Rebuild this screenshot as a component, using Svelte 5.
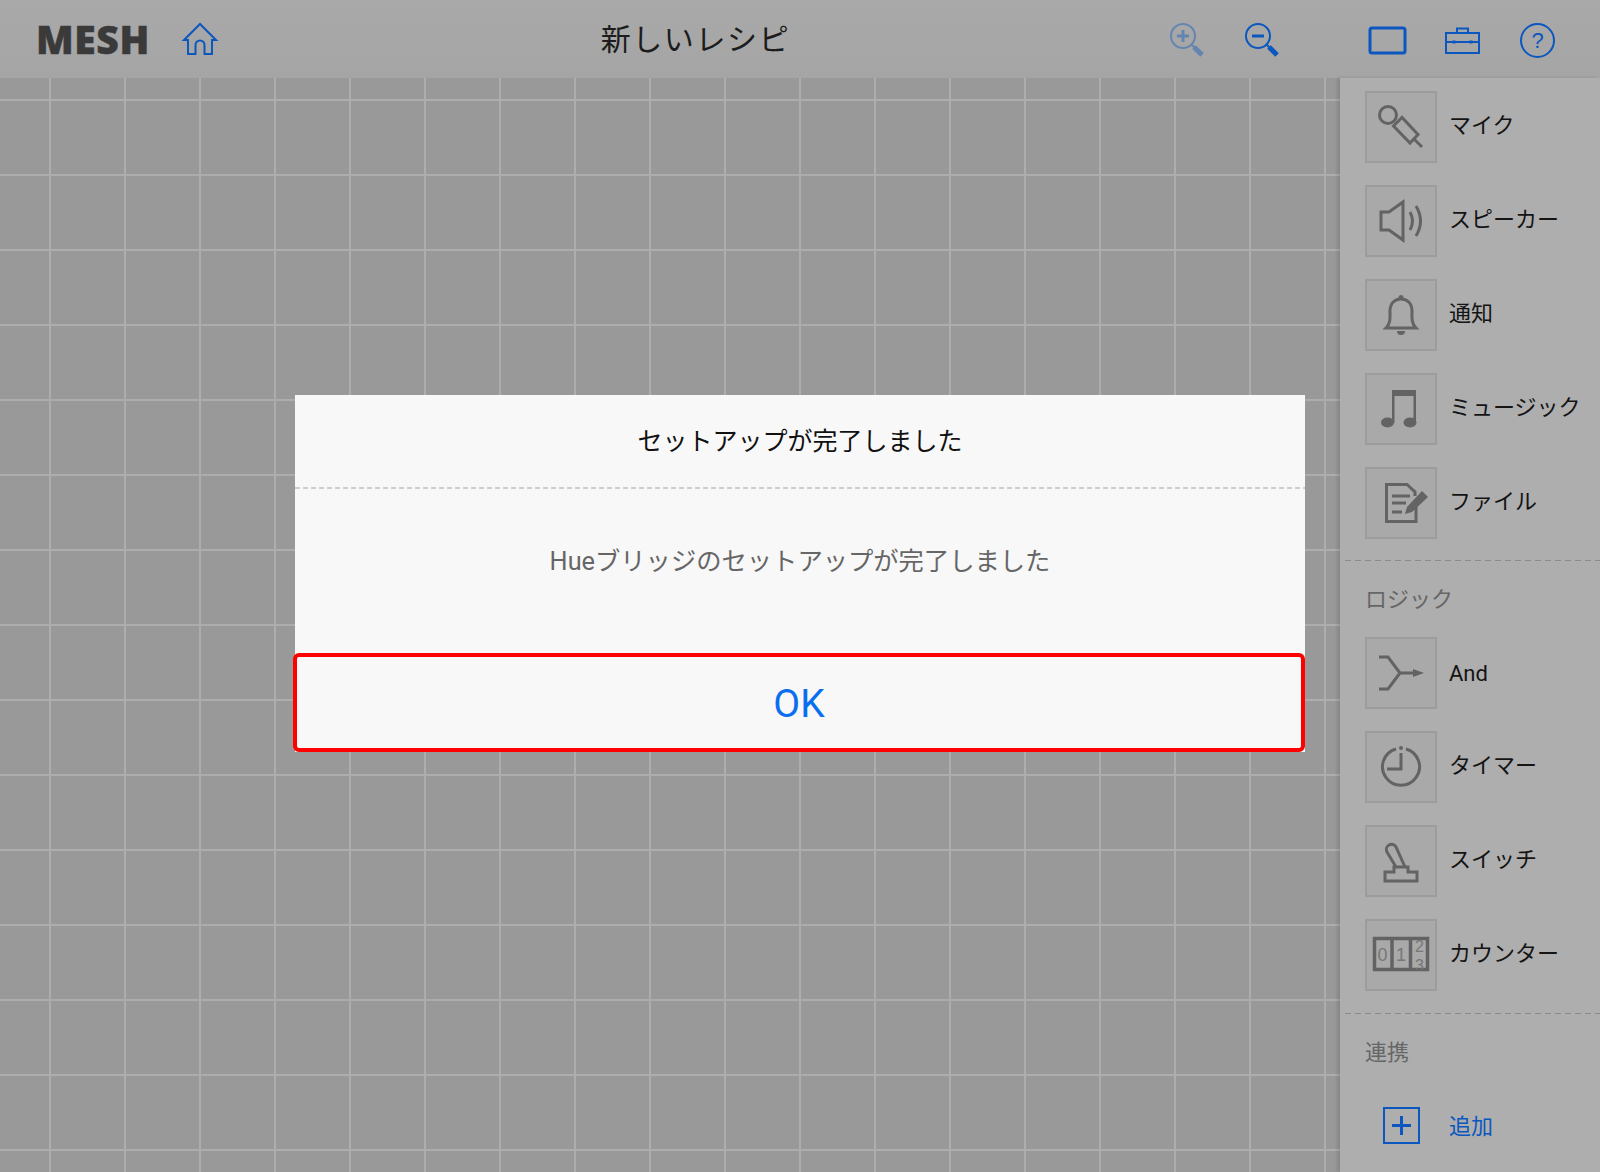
<script>
  const tools = [
    { id: "mic", label: "マイク" },
    { id: "speaker", label: "スピーカー" },
    { id: "bell", label: "通知" },
    { id: "music", label: "ミュージック" },
    { id: "file", label: "ファイル" }
  ];
  const logic = [
    { id: "and", label: "And", latin: true },
    { id: "timer", label: "タイマー" },
    { id: "switch", label: "スイッチ" },
    { id: "counter", label: "カウンター" }
  ];
</script>

{#snippet tileIcon(id)}
  <svg class="glyph" viewBox="0 0 72 72" width="72" height="72">
    {#if id === "mic"}
      <circle cx="23" cy="24" r="8.5" />
      <path d="M28.5 35 L37 26.5 L53 43.5 L45 52 Z M49 48 L57 56" />
    {:else if id === "speaker"}
      <path d="M16 27 H24 L38 17 V55 L24 45 H16 Z" />
      <path d="M45 27 Q50 36 45 45 M51 21 Q60 36 51 51" />
    {:else if id === "bell"}
      <path d="M21 49 C26 44 25 38 25 32 C25 24 30 20 36 20 C42 20 47 24 47 32 C47 38 46 44 51 49 Z" />
      <circle class="solid" cx="36" cy="18.5" r="2.5" />
      <path class="solid" d="M32 52 H40 A4 4 0 0 1 32 52 Z" />
    {:else if id === "music"}
      <path class="solid" d="M27 17 H51 V50 H48.5 V23 H29.5 V50 H27 Z" />
      <ellipse class="solid" cx="22.5" cy="49.5" rx="6.5" ry="5" />
      <ellipse class="solid" cx="45" cy="49.5" rx="6.5" ry="5" />
    {:else if id === "file"}
      <path d="M51 38 V54.5 H21.5 V17.5 H42 L50 25 V29" />
      <path d="M27 29 H45 M27 36 H41 M27 45 H37" />
      <path class="solid" d="M57 24 L63 30 L47 45 L40 47 L42 40 Z" />
    {:else if id === "and"}
      <path d="M14 20 H23 L35 36 L23 52 H14 M35 36 H48" />
      <path class="solid" d="M48 32 L59 36 L48 40 Z" />
    {:else if id === "timer"}
      <path d="M41 18 A18.5 18.5 0 1 1 31 18" />
      <circle class="solid" cx="36" cy="17" r="2" />
      <path d="M36 22 V38 H22" />
    {:else if id === "switch"}
      <path d="M31 42 L22 27 A5 5 0 0 1 31 22 L40 42" />
      <path d="M29 42 H43 V47 H52 V56 H20 V47 H29 Z" />
    {:else if id === "counter"}
      <defs>
        <clipPath id="reel"><rect x="47" y="20" width="16" height="30.5" /></clipPath>
      </defs>
      <rect class="frame" x="9.5" y="19.5" width="53" height="31" />
      <path class="frame" d="M27 19 V51 M45.5 19 V51" />
      <text x="17.5" y="41.5">0</text>
      <text x="36" y="41.5">1</text>
      <g clip-path="url(#reel)">
        <text class="small" x="54.5" y="32.5">2</text>
        <text class="small" x="54.5" y="52">3</text>
      </g>
    {/if}
  </svg>
{/snippet}

<div class="page">
  <header>
    <div class="left">
      <span class="logo">MESH</span>
      <svg class="nav" viewBox="0 0 40 40" width="40" height="40">
        <path d="M4 21 L20 5 L36 21 H32 V35 H24.5 V26 A4.5 4.5 0 0 0 15.5 26 V35 H8 V21 Z" />
      </svg>
    </div>
    <h1>新しいレシピ</h1>
    <div class="actions">
      <div class="cell faded">
        <svg class="nav" viewBox="0 0 40 40" width="40" height="40">
          <circle cx="15" cy="17" r="12" />
          <path class="fat" d="M9 17 H21 M15 11 V23" />
          <path d="M23.5 25.5 L27 29" />
          <path class="handle" d="M26 28 L34 36" />
        </svg>
      </div>
      <div class="cell">
        <svg class="nav" viewBox="0 0 40 40" width="40" height="40">
          <circle cx="15" cy="17" r="12" />
          <path class="fat" d="M9 17 H21" />
          <path d="M23.5 25.5 L27 29" />
          <path class="handle" d="M26 28 L34 36" />
        </svg>
      </div>
      <div class="cell spaced">
        <svg class="nav thick" viewBox="0 0 40 40" width="40" height="40">
          <rect x="2" y="9" width="35" height="25" rx="2" />
        </svg>
      </div>
      <div class="cell">
        <svg class="nav" viewBox="0 0 40 40" width="40" height="40">
          <rect x="3" y="14" width="33" height="20" />
          <path d="M14 14 V9.5 H25 V14 M3 23 H36" />
          <path class="fat" d="M9.5 23 H12.5 M26.5 23 H29.5" />
        </svg>
      </div>
      <div class="cell help">
        <span class="ring">?</span>
      </div>
    </div>
  </header>

  <main>
    <div class="canvas"></div>
    <aside>
      {#each tools as tool}
        <div class="row">
          <div class="tile">{@render tileIcon(tool.id)}</div>
          <span>{tool.label}</span>
        </div>
      {/each}

      <div class="divider"></div>
      <div class="section">ロジック</div>
      {#each logic as tool}
        <div class="row">
          <div class="tile">{@render tileIcon(tool.id)}</div>
          <span class:latin={tool.latin}>{tool.label}</span>
        </div>
      {/each}

      <div class="divider last"></div>
      <div class="section">連携</div>
      <div class="add">
        <div class="slot"><div class="plus"></div></div>
        <span>追加</span>
      </div>
    </aside>
  </main>

  <div class="dialog">
    <div class="title">セットアップが完了しました</div>
    <div class="rule"></div>
    <div class="message">Hueブリッジのセットアップが完了しました</div>
    <button>OK</button>
  </div>
</div>

<style>
  :global(body) {
    margin: 0;
    background: #999;
  }

  .page {
    position: relative;
    width: 1600px;
    height: 1172px;
    overflow: hidden;
    font-family: Roboto, "Noto Sans CJK JP", sans-serif;
    color: #141414;
    display: flex;
    flex-direction: column;
  }

  header {
    height: 78px;
    flex: none;
    display: flex;
    align-items: center;
    background: linear-gradient(to bottom, #a9a9a9, #a5a5a5);
  }

  .left {
    display: flex;
    align-items: center;
    padding-left: 36px;
    gap: 30px;
  }

  .logo {
    font-family: "Open Sans", sans-serif;
    font-weight: 800;
    font-size: 39px;
    line-height: 40px;
    letter-spacing: 0.6px;
    color: #3a3a3a;
    -webkit-text-stroke: 0.5px #3a3a3a;
  }

  h1 {
    flex: 1;
    margin: 0;
    padding: 0 0 5px 21px;
    text-align: center;
    font-size: 30px;
    font-weight: 400;
    letter-spacing: 1.6px;
    color: #1c1c1c;
  }

  .actions {
    display: flex;
    padding-right: 25px;
  }

  .cell {
    width: 75px;
    display: flex;
    justify-content: center;
  }

  .cell.faded {
    opacity: 0.42;
  }

  .cell.spaced {
    margin-left: 50px;
  }

  .nav {
    display: block;
  }

  .nav path,
  .nav circle,
  .nav rect {
    fill: none;
    stroke: #0b57bf;
    stroke-width: 2;
  }

  .nav.thick rect {
    stroke-width: 3;
  }

  .nav .fat {
    stroke-width: 3;
  }

  .nav .handle {
    stroke-width: 5;
  }

  .help {
    padding-top: 4px;
  }

  .ring {
    box-sizing: border-box;
    width: 35px;
    height: 35px;
    border: 2px solid #0b57bf;
    border-radius: 50%;
    display: flex;
    align-items: center;
    justify-content: center;
    font-size: 22px;
    font-family: "Liberation Sans", sans-serif;
    color: #0b57bf;
  }

  main {
    flex: 1;
    display: flex;
    min-height: 0;
  }

  .canvas {
    flex: 1;
    background-color: #999;
    background-image:
      linear-gradient(to right, #adadad 2px, transparent 2px),
      linear-gradient(to bottom, #adadad 2px, transparent 2px);
    background-size: 75px 75px;
    background-position: 49px 21px;
  }

  aside {
    box-sizing: border-box;
    width: 260px;
    flex: none;
    padding: 13px 0 0 25px;
    background: #aeaeae;
    box-shadow: -3px 0 3px rgba(0, 0, 0, 0.12);
    position: relative;
  }

  .row {
    display: flex;
    align-items: center;
    height: 72px;
    gap: 12px;
    margin-bottom: 22px;
    font-size: 22px;
    white-space: nowrap;
  }

  .row span {
    padding-bottom: 8px;
  }

  .row span.latin {
    padding-bottom: 0;
  }

  .tile {
    box-sizing: border-box;
    width: 72px;
    height: 72px;
    flex: none;
    border: 2px solid #9c9c9c;
    background: #a9a9a9;
  }

  .glyph {
    display: block;
    margin: -2px;
  }

  .glyph path,
  .glyph circle,
  .glyph rect,
  .glyph ellipse {
    fill: none;
    stroke: #636363;
    stroke-width: 3;
  }

  .glyph .solid {
    fill: #636363;
    stroke: none;
  }

  .glyph .frame {
    stroke-width: 3.5;
  }

  .glyph text {
    font-family: "Liberation Sans", sans-serif;
    font-size: 18px;
    text-anchor: middle;
    fill: #777;
    stroke: none;
  }

  .glyph text.small {
    font-size: 16px;
  }

  .divider {
    height: 1px;
    margin: -1px 0 24px -20px;
    background: repeating-linear-gradient(to right, #8a8a8a 0 6px, transparent 6px 10px);
  }

  .divider.last {
    margin-top: 0;
  }

  .section {
    font-size: 22px;
    line-height: 30px;
    color: #666;
    margin-bottom: 22px;
  }

  .add {
    display: flex;
    align-items: center;
    height: 72px;
    margin-top: -1px;
    gap: 12px;
    font-size: 22px;
    color: #0b57bf;
  }

  .add span {
    padding-bottom: 2px;
  }

  .slot {
    width: 72px;
    display: flex;
    justify-content: center;
  }

  .plus {
    box-sizing: border-box;
    width: 37px;
    height: 37px;
    border: 2px solid #0b57bf;
    background:
      linear-gradient(#0b57bf, #0b57bf) center / 19px 3px no-repeat,
      linear-gradient(#0b57bf, #0b57bf) center / 3px 19px no-repeat;
  }

  .dialog {
    position: absolute;
    left: 295px;
    top: 395px;
    width: 1010px;
    background: #f8f8f8;
    display: flex;
    flex-direction: column;
  }

  .title {
    box-sizing: border-box;
    height: 92px;
    padding-bottom: 4px;
    display: flex;
    align-items: center;
    justify-content: center;
    font-size: 25px;
    color: #111;
  }

  .rule {
    height: 2px;
    background: repeating-linear-gradient(to right, #cfcfcf 0 5px, transparent 5px 8px);
  }

  .message {
    box-sizing: border-box;
    height: 164px;
    padding-bottom: 24px;
    display: flex;
    align-items: center;
    justify-content: center;
    font-size: 25.3px;
    color: #666;
  }

  button {
    box-sizing: border-box;
    margin-left: -2px;
    width: 1012px;
    height: 99px;
    padding: 2px 0 0;
    background: #f8f8f8;
    border: 4px solid #f00;
    border-radius: 6px;
    font-family: Roboto, sans-serif;
    font-size: 39px;
    color: #0a6ef0;
  }
</style>
